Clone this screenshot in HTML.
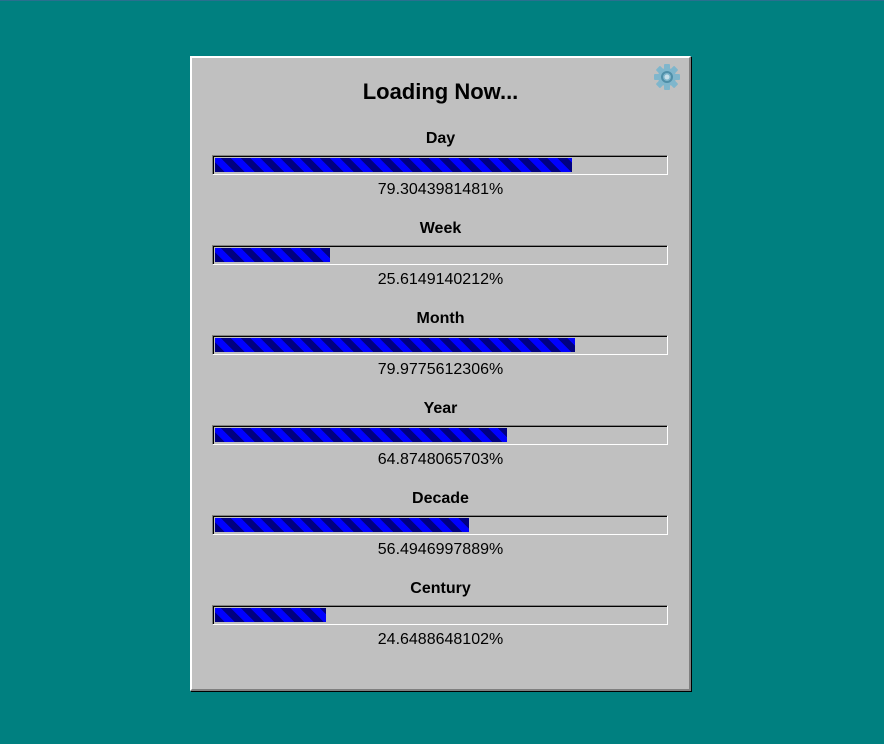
<!DOCTYPE html>
<html><head><style>
html,body{margin:0;padding:0;}
body{width:884px;height:744px;background:#008080;position:relative;overflow:hidden;font-family:"Liberation Sans",sans-serif;border-top:1px solid #2a6f8f;box-sizing:border-box;}
#p{position:absolute;left:190px;top:55px;width:497px;height:631px;background:#c0c0c0;border-top:2px solid #fff;border-left:2px solid #fff;border-right:2px solid #808080;border-bottom:2px solid #808080;box-shadow:1px 1px 0 #000;}
h1{position:absolute;left:0;width:100%;top:21px;margin:0;text-align:center;font-size:22px;font-weight:bold;color:#000;}
.s{position:absolute;left:0;width:100%;}
.l{position:absolute;width:100%;text-align:center;font-weight:bold;font-size:16px;top:0;}
.b{position:absolute;left:20px;top:25px;width:454px;height:18px;border-top:1px solid #808080;border-left:1px solid #808080;border-bottom:1px solid #fff;border-right:1px solid #fff;background:#c0c0c0;}
.b:before{content:"";position:absolute;left:0;top:0;right:0;bottom:0;border-top:1px solid #000;border-left:1px solid #000;}
.f{position:absolute;left:2px;top:2px;height:14px;background:repeating-linear-gradient(45deg,#000080 0 7px,#0000ff 7px 14px);}
.v{position:absolute;width:100%;text-align:center;font-size:16px;top:51px;}
</style></head><body>
<div id="p">
<svg style="position:absolute;left:461px;top:5px" width="28" height="28" viewBox="0 0 28 28"><g fill="#7fb6cc"><circle cx="14" cy="14" r="9"/><g id="t"><rect x="11" y="1" width="6" height="6" rx="1"/><rect x="11" y="21" width="6" height="6" rx="1"/></g><use href="#t" transform="rotate(45 14 14)"/><use href="#t" transform="rotate(90 14 14)"/><use href="#t" transform="rotate(135 14 14)"/></g><circle cx="14" cy="14" r="5" fill="none" stroke="#4f8fa8" stroke-width="2"/><circle cx="14" cy="14" r="2.5" fill="#c8e0ea"/></svg>
<h1>Loading Now...</h1>
<div class="s" style="top:72px"><div class="l">Day</div><div class="b"><div class="f" style="width:357px"></div></div><div class="v">79.3043981481%</div></div>
<div class="s" style="top:162px"><div class="l">Week</div><div class="b"><div class="f" style="width:115px"></div></div><div class="v">25.6149140212%</div></div>
<div class="s" style="top:252px"><div class="l">Month</div><div class="b"><div class="f" style="width:360px"></div></div><div class="v">79.9775612306%</div></div>
<div class="s" style="top:342px"><div class="l">Year</div><div class="b"><div class="f" style="width:292px"></div></div><div class="v">64.8748065703%</div></div>
<div class="s" style="top:432px"><div class="l">Decade</div><div class="b"><div class="f" style="width:254px"></div></div><div class="v">56.4946997889%</div></div>
<div class="s" style="top:522px"><div class="l">Century</div><div class="b"><div class="f" style="width:111px"></div></div><div class="v">24.6488648102%</div></div>
</div>
</body></html>
